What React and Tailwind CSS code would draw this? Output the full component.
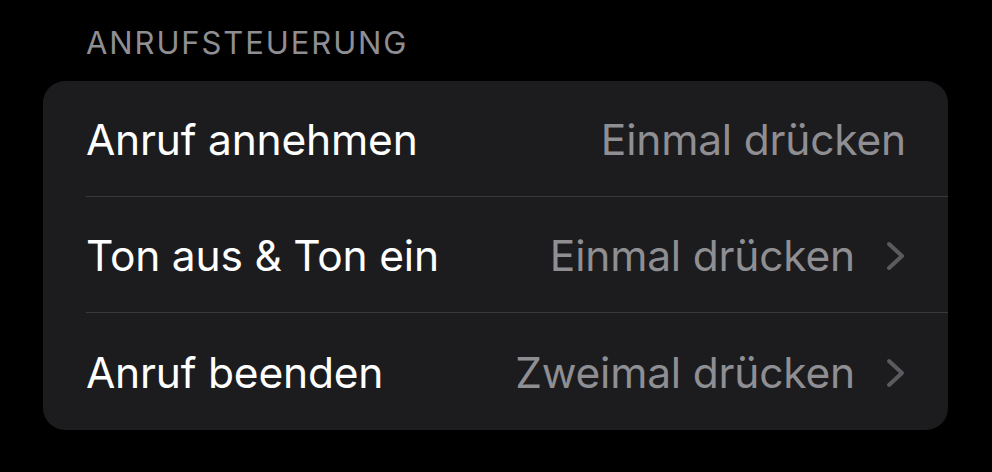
const rows = [
  { label: "Anruf annehmen", value: "Einmal drücken", chevron: false },
  { label: "Ton aus & Ton ein", value: "Einmal drücken", chevron: true },
  { label: "Anruf beenden", value: "Zweimal drücken", chevron: true },
];

function Chevron() {
  return (
    <svg width="20" height="30" viewBox="0 0 20 30" className="ml-[31px]">
      <polyline
        points="3,3 16,15 3,27"
        fill="none"
        stroke="#5a5a5f"
        strokeWidth="4"
        strokeLinecap="round"
        strokeLinejoin="round"
      />
    </svg>
  );
}

function Row({ label, value, chevron, last }) {
  return (
    <div className="pl-[43px]">
      <div
        className={
          "flex items-center justify-between pr-[42px] pt-[2px] " +
          (last ? "h-[117px]" : "h-[116px] border-b border-[#38383a]")
        }
      >
        <span className="text-white text-[42.5px] tracking-[-0.2px]">{label}</span>
        <div className="flex items-center">
          <span className="text-[#8e8e93] text-[42.5px] tracking-[-0.2px]">{value}</span>
          {chevron && <Chevron />}
        </div>
      </div>
    </div>
  );
}

export default function App() {
  return (
    <div
      className="w-[992px] h-[472px] bg-black pt-[23px] pl-[43px] pr-[44px]"
      style={{ fontFamily: "Inter, 'Noto Sans', sans-serif" }}
    >
      <div className="pl-[43px] h-[58px] text-[#8e8e93] text-[31px] leading-[40px] tracking-[1.9px]">
        ANRUFSTEUERUNG
      </div>
      <div className="bg-[#1c1c1e] rounded-[22px] overflow-hidden">
        {rows.map((r, i) => (
          <Row key={r.label} {...r} last={i === rows.length - 1} />
        ))}
      </div>
    </div>
  );
}
